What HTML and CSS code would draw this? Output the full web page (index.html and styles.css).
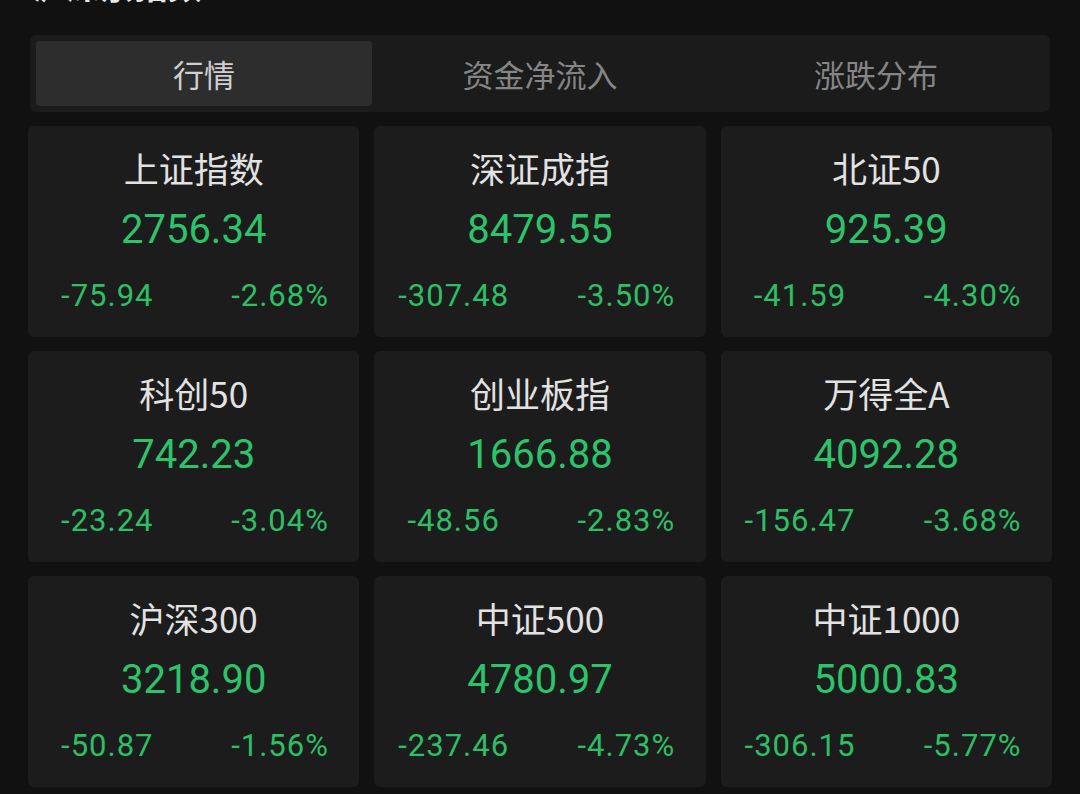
FILE: index.html
```html
<!DOCTYPE html>
<html lang="zh-CN">
<head>
    <meta charset="UTF-8">
    <meta name="viewport" content="width=device-width, initial-scale=1.0">
    <title>沪深指数</title>
    <link rel="stylesheet" href="styles.css">
</head>
<body>
    <div class="page">
        <div class="section-head">
            <span class="section-title">沪深京指数</span>
            <span class="section-icon"></span>
            <span class="section-more"></span>
        </div>

        <div class="tabs">
            <div class="tab active">行情</div>
            <div class="tab">资金净流入</div>
            <div class="tab">涨跌分布</div>
        </div>

        <div class="index-grid">
            <div class="index-card">
                <div class="index-name">上证指数</div>
                <div class="index-value">2756.34</div>
                <div class="index-change"><span>-75.94</span><span>-2.68%</span></div>
            </div>
            <div class="index-card">
                <div class="index-name">深证成指</div>
                <div class="index-value">8479.55</div>
                <div class="index-change"><span>-307.48</span><span>-3.50%</span></div>
            </div>
            <div class="index-card">
                <div class="index-name">北证50</div>
                <div class="index-value">925.39</div>
                <div class="index-change"><span>-41.59</span><span>-4.30%</span></div>
            </div>
            <div class="index-card">
                <div class="index-name">科创50</div>
                <div class="index-value">742.23</div>
                <div class="index-change"><span>-23.24</span><span>-3.04%</span></div>
            </div>
            <div class="index-card">
                <div class="index-name">创业板指</div>
                <div class="index-value">1666.88</div>
                <div class="index-change"><span>-48.56</span><span>-2.83%</span></div>
            </div>
            <div class="index-card">
                <div class="index-name">万得全A</div>
                <div class="index-value">4092.28</div>
                <div class="index-change"><span>-156.47</span><span>-3.68%</span></div>
            </div>
            <div class="index-card">
                <div class="index-name">沪深300</div>
                <div class="index-value">3218.90</div>
                <div class="index-change"><span>-50.87</span><span>-1.56%</span></div>
            </div>
            <div class="index-card">
                <div class="index-name">中证500</div>
                <div class="index-value">4780.97</div>
                <div class="index-change"><span>-237.46</span><span>-4.73%</span></div>
            </div>
            <div class="index-card">
                <div class="index-name">中证1000</div>
                <div class="index-value">5000.83</div>
                <div class="index-change"><span>-306.15</span><span>-5.77%</span></div>
            </div>
        </div>
    </div>
</body>
</html>
```

FILE: styles.css
```css
html, body {
    margin: 0;
    padding: 0;
    background-color: #111111;
}
body {
    font-family: "Noto Sans CJK SC", "Noto Sans", sans-serif;
    color: #dedede;
    overflow: hidden;
}
.page {
    padding: 0 28px;
}
.section-head {
    display: flex;
    align-items: flex-end;
    height: 40px;
    margin-top: -35px;
    padding-left: 4px;
}
.section-title {
    font-size: 34px;
    line-height: 40px;
    font-weight: bold;
    color: #e8e8e8;
}
.section-icon {
    width: 22px;
    height: 22px;
    margin-left: 28px;
    margin-bottom: 8px;
    border: 3px solid #777;
    border-radius: 3px;
}
.section-more {
    margin-left: auto;
    margin-right: 22px;
    width: 8px;
    height: 8px;
    border-radius: 50%;
    background-color: #555;
    margin-bottom: 38px;
}
.tabs {
    display: flex;
    margin: 30px 2px 0;
    padding: 6px;
    background-color: #1b1b1b;
    border-radius: 6px;
}
.tab {
    flex: 1;
    height: 65px;
    line-height: 65px;
    text-align: center;
    font-size: 31px;
    color: #858585;
    border-radius: 4px;
}
.tab.active {
    background-color: #2d2d2d;
    color: #cfcfcf;
}
.index-grid {
    display: grid;
    grid-template-columns: repeat(3, 1fr);
    gap: 14px 15px;
    margin-top: 14px;
}
.index-card {
    height: 211px;
    background-color: #1c1c1c;
    border-radius: 6px;
    text-align: center;
    padding-top: 20px;
    box-sizing: border-box;
}
.index-name {
    font-size: 35px;
    line-height: 44px;
    color: #e2e2e2;
}
.index-value {
    margin-top: 14px;
    font-family: Roboto, "Liberation Sans", sans-serif;
    font-size: 40px;
    line-height: 52px;
    color: #2cc46b;
}
.index-change {
    display: flex;
    margin-top: 22px;
    font-family: Roboto, "Liberation Sans", sans-serif;
    font-size: 31px;
    letter-spacing: 1px;
    line-height: 36px;
    color: #2cbf66;
}
.index-change span {
    flex: 1;
    text-align: center;
}
.index-change span:first-child {
    padding-right: 4px;
}
.index-change span:last-child {
    padding-left: 10px;
}
```
